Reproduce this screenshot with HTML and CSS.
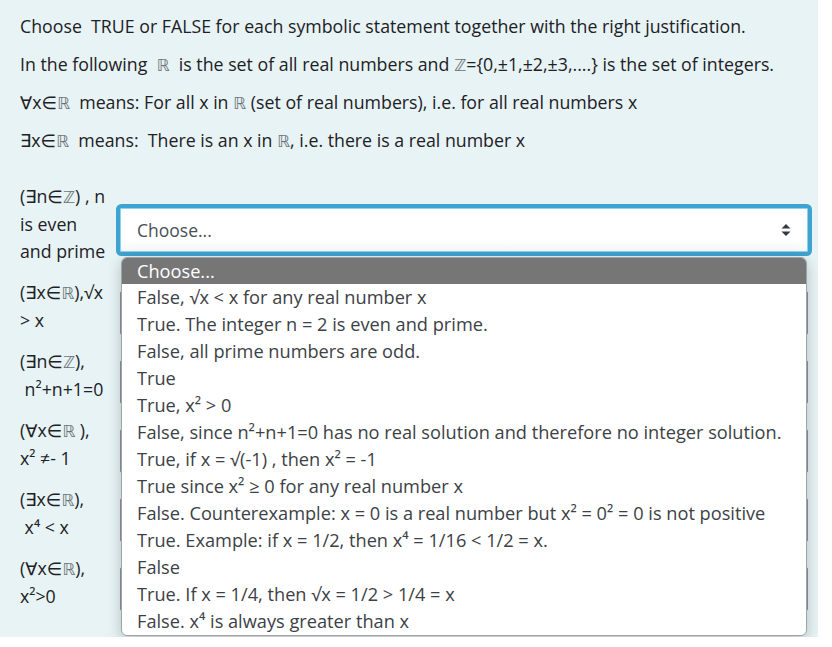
FILE: index.html
```html
<!DOCTYPE html>
<html lang="en">
<head>
  <meta charset="UTF-8" />
  <meta name="viewport" content="width=device-width, initial-scale=1.0" />
  <title>True or False</title>
  <link rel="stylesheet" href="styles.css">
</head>
<body>
  <div class="formulation">
    <p>Choose &nbsp;TRUE or FALSE for each symbolic statement together with the right justification.</p>
    <p>In the following &nbsp;<span class="set">ℝ</span> &nbsp;is the set of all real numbers and <span class="set">ℤ</span>={0,±1,±2,±3,....} is the set of integers.</p>
    <p>∀x∈<span class="set">ℝ</span> &nbsp;means: For all x in <span class="set">ℝ</span> (set of real numbers), i.e. for all real numbers x</p>
    <p>∃x∈<span class="set">ℝ</span> &nbsp;means: &nbsp;There is an x in <span class="set">ℝ</span>, i.e. there is a real number x</p>

    <div class="answers">
      <div class="row first">
        <div class="label">(∃n∈<span class="set">ℤ</span>) , n<br>is even<br>and prime</div>
        <div class="select focused">
          <span>Choose...</span>
          <svg class="arrows" width="10" height="14" viewBox="0 0 10 14"><path d="M5 1 L9.5 5.5 H0.5 Z M5 13 L0.5 8.5 H9.5 Z" fill="#343a40"/></svg>
        </div>
      </div>
      <!-- the other selects sit under the open list, only their edges show -->
      <div class="row">
        <div class="label">(∃x∈<span class="set">ℝ</span>),√x<br>&gt; x</div>
        <div class="select"></div>
      </div>
      <div class="row">
        <div class="label">(∃n∈<span class="set">ℤ</span>),<br>&nbsp;n²+n+1=0</div>
        <div class="select"></div>
      </div>
      <div class="row">
        <div class="label">(∀x∈<span class="set">ℝ</span> ),<br>x² ≠- 1</div>
        <div class="select"></div>
      </div>
      <div class="row">
        <div class="label">(∃x∈<span class="set">ℝ</span>),<br>&nbsp;x⁴ &lt; x</div>
        <div class="select"></div>
      </div>
      <div class="row">
        <div class="label">(∀x∈<span class="set">ℝ</span>),<br>x²&gt;0</div>
        <div class="select"></div>
      </div>
    </div>

    <ul class="dropdown">
      <li class="selected">Choose...</li>
      <li>False, √x &lt; x for any real number x</li>
      <li>True. The integer n = 2 is even and prime.</li>
      <li>False, all prime numbers are odd.</li>
      <li>True</li>
      <li>True, x² &gt; 0</li>
      <li>False, since n²+n+1=0 has no real solution and therefore no integer solution.</li>
      <li>True, if x = √(-1) , then x² = -1</li>
      <li>True since x² ≥ 0 for any real number x</li>
      <li>False. Counterexample: x = 0 is a real number but x² = 0² = 0 is not positive</li>
      <li>True. Example: if x = 1/2, then x⁴ = 1/16 &lt; 1/2 = x.</li>
      <li>False</li>
      <li>True. If x = 1/4, then √x = 1/2 &gt; 1/4 = x</li>
      <li>False. x⁴ is always greater than x</li>
    </ul>
  </div>
</body>
</html>
```
FILE: styles.css
```css
body {
  margin: 0;
  background-color: #ffffff;
  font-family: "Open Sans", "DejaVu Sans", sans-serif;
  font-size: 17.75px;
  color: #1d2125;
}

.formulation {
  position: relative;
  width: 818px;
  height: 637px;
  box-sizing: border-box;
  padding: 13px 0 0 20px;
  background-color: #e7f3f5;
  overflow: hidden;
}

.formulation p {
  margin: 0 0 12px;
  line-height: 26px;
  white-space: nowrap;
}

.set {
  color: #6c7378;
  font-family: "DejaVu Sans", sans-serif;
  font-size: 16.5px;
  line-height: 1;
}

.answers {
  padding-top: 12px;
}

.row {
  display: flex;
  align-items: center;
  padding: 6px 0 7px;
}

.label {
  flex: 0 0 100px;
  line-height: 27.5px;
  white-space: nowrap;
}

.select {
  flex: 0 0 688px;
  display: flex;
  align-items: center;
  justify-content: space-between;
  height: 44px;
  box-sizing: border-box;
  padding: 0 16px;
  border: 1px solid #8f959e;
  border-radius: 2px;
  background-color: #ffffff;
  color: #495057;
  font-size: 17.5px;
}

.row .select {
  margin-top: 12px;
}

.select.focused {
  border-color: #8fd0ea;
  box-shadow: 0 0 0 4px #3ea3d0;
  background: linear-gradient(#ffffff 70%, #f6f7f8);
}

.dropdown {
  position: absolute;
  left: 121px;
  top: 257px;
  width: 686px;
  margin: 0;
  padding: 0;
  list-style: none;
  box-sizing: border-box;
  border: 1px solid #9da3a8;
  border-radius: 6px;
  background-color: #ffffff;
  box-shadow: 0 4px 14px rgba(0, 0, 0, 0.22);
  overflow: hidden;
  font-size: 18.2px;
}

.dropdown li {
  height: 27px;
  line-height: 27px;
  padding-left: 15px;
  color: #3c4146;
  white-space: nowrap;
}

.dropdown li.selected {
  height: 26px;
  line-height: 26px;
  background-color: #767676;
  color: #ffffff;
}
```
